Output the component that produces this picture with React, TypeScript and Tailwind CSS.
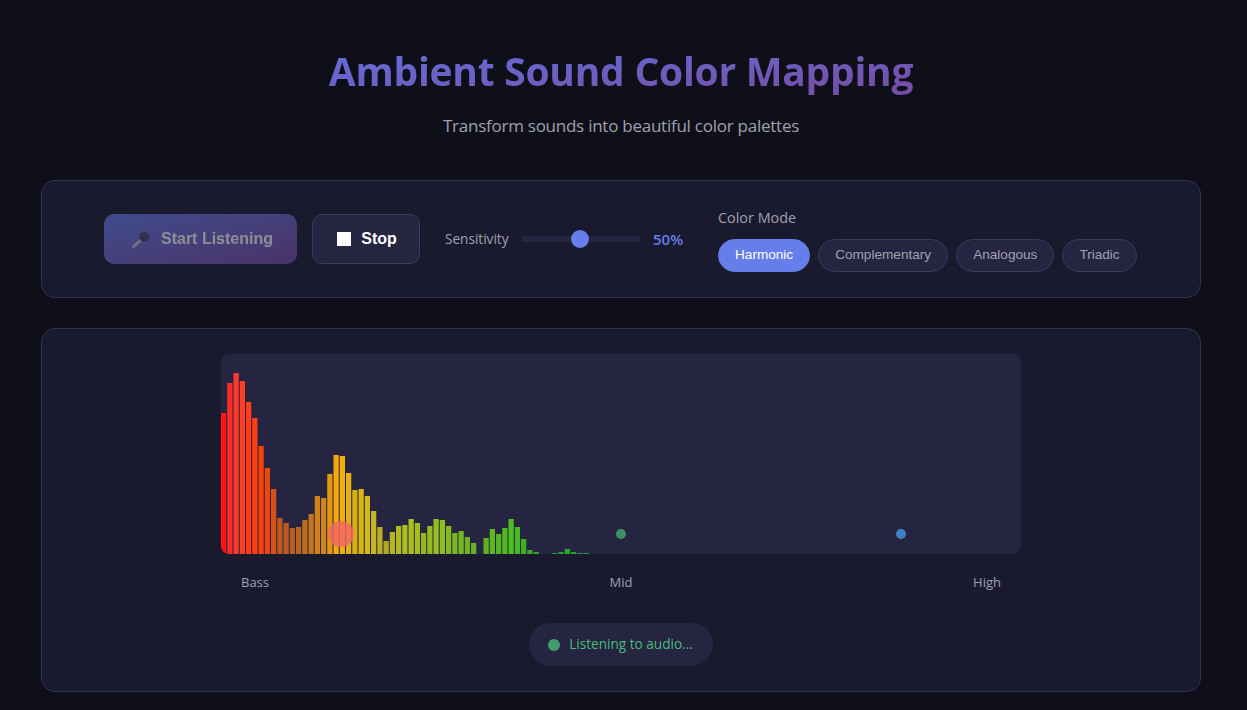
const heights = [
  141, 171, 181, 173, 152, 136, 108, 86, 65, 36, 31, 26, 27, 34, 40, 58, 56, 80, 99, 98,
  81, 64, 65, 58, 43, 27, 13, 22, 28, 29, 35, 31, 21, 28, 35, 34, 28, 21, 23, 17,
  11, 0, 16, 25, 20, 26, 35, 27, 15, 4, 2, 0, 0, 1, 2, 5, 2, 1, 1,
];

const modes = ["Harmonic", "Complementary", "Analogous", "Triadic"];

function barColor(i: number, h: number) {
  const v = h / 200;
  const sat = 62 + v * 60;
  const light = 40 + v * 20;
  return `hsl(${i * 2.25}, ${Math.min(sat, 100)}%, ${light}%)`;
}

function MicIcon() {
  return (
    <svg width="20" height="20" viewBox="0 0 20 20">
      <path d="M0.8 17 L9.2 9.6 L11.4 11.8 L3 19 Q1.6 19.4 0.8 17Z" fill="#c8c8d0" />
      <circle cx="13.3" cy="7.8" r="5" fill="#4a4566" />
      <path d="M10.5 5 L16 10.4 M12.4 3.4 L17.4 8.4" stroke="#6f6a8c" strokeWidth="0.8" />
    </svg>
  );
}

function Spectrum() {
  return (
    <div className="relative h-[200px] w-[800px] overflow-hidden rounded-lg bg-[#252542]">
      <svg width="800" height="200" viewBox="0 0 800 200" className="block">
        {heights.map((h, i) =>
          h > 0 ? (
            <rect key={i} x={i * 6.25} y={200 - h} width={5.25} height={h} fill={barColor(i, h)} />
          ) : null
        )}
      </svg>
      <div className="absolute left-[107px] top-[167px] h-[26px] w-[26px] rounded-full bg-[#f56565] opacity-80" />
      <div className="absolute left-[395px] top-[175px] h-[10px] w-[10px] rounded-full bg-[#48bb78] opacity-70" />
      <div className="absolute left-[675px] top-[175px] h-[10px] w-[10px] rounded-full bg-[#4299e1] opacity-80" />
    </div>
  );
}

export default function App() {
  return (
    <div className="min-h-[710px] w-full overflow-hidden bg-[#0f0f1a] font-['Open_Sans','Noto_Sans',sans-serif] text-white">
      <div className="w-[1242px] px-[41px] pt-[44px]">
        <div className="text-center">
          <h1 className="inline-block bg-gradient-to-br from-[#6070e0] to-[#764ba2] bg-clip-text text-[39px] font-bold leading-[54px] tracking-[-0.26px] text-transparent">
            Ambient Sound Color Mapping
          </h1>
          <p className="mt-[16px] text-[17px] leading-[24px] tracking-[-0.25px] text-[#a0a0b0]">
            Transform sounds into beautiful color palettes
          </p>
        </div>

        <div className="mt-[42px] flex h-[118px] items-center gap-[25px] rounded-[14px] border border-[#32324f] bg-[#1a1a2e] pl-[62px]">
          <div className="flex items-center gap-[15px] font-['Liberation_Sans',sans-serif]">
            <button className="flex h-[50px] w-[193px] items-center justify-center gap-[10px] rounded-[10px] bg-gradient-to-br from-[#667eea] to-[#764ba2] pl-[3px] text-base font-bold text-white opacity-50">
              <MicIcon />
              Start Listening
            </button>
            <button className="flex h-[50px] w-[108px] items-center justify-center gap-[10px] rounded-[10px] border border-[#3a3a5c] bg-[#252542] pl-[2px] text-base font-bold text-white">
              <span className="h-[14px] w-[14px] bg-white" />
              Stop
            </button>
          </div>

          <div className="flex items-center gap-3">
            <span className="w-[64px] whitespace-nowrap text-[13.6px] text-[#a0a0b0]">Sensitivity</span>
            <div className="relative h-[6px] w-[120px] rounded-full bg-[#252542]">
              <div className="absolute left-[50px] top-[-6px] h-[18px] w-[18px] rounded-full bg-[#667eea]" />
            </div>
            <span className="w-[40px] text-[15px] font-semibold text-[#667eea]">50%</span>
          </div>

          <div className="mt-[3px] flex flex-col gap-3">
            <span className="text-[14.4px] leading-[18px] text-[#a0a0b0]">Color Mode</span>
            <div className="flex gap-2 font-['Liberation_Sans',sans-serif]">
              {modes.map((m, i) => (
                <button
                  key={m}
                  className={
                    i === 0
                      ? "h-[33px] rounded-full border border-[#667eea] bg-[#667eea] px-4 text-[13.6px] text-white"
                      : "h-[33px] rounded-full border border-[#3a3a5c] bg-[#252542] px-4 text-[13.6px] text-[#a0a0b0]"
                  }
                >
                  {m}
                </button>
              ))}
            </div>
          </div>
        </div>

        <div className="mt-[30px] flex h-[364px] flex-col items-center rounded-[14px] border border-[#32324f] bg-[#1a1a2e] pt-[25px]">
          <Spectrum />
          <div className="mt-[19px] flex w-[800px] justify-between px-5 text-[13px] leading-[18px] text-[#a0a0b0]">
            <span>Bass</span>
            <span>Mid</span>
            <span>High</span>
          </div>
          <div className="mt-[32px] flex h-[43px] items-center gap-[9px] rounded-full bg-[#252542] pl-[19px] pr-5">
            <span className="h-[12px] w-[12px] rounded-full bg-[#48bb78] opacity-80" />
            <span className="text-[13.6px] text-[#48bb78]">Listening to audio...</span>
          </div>
        </div>
      </div>
    </div>
  );
}
